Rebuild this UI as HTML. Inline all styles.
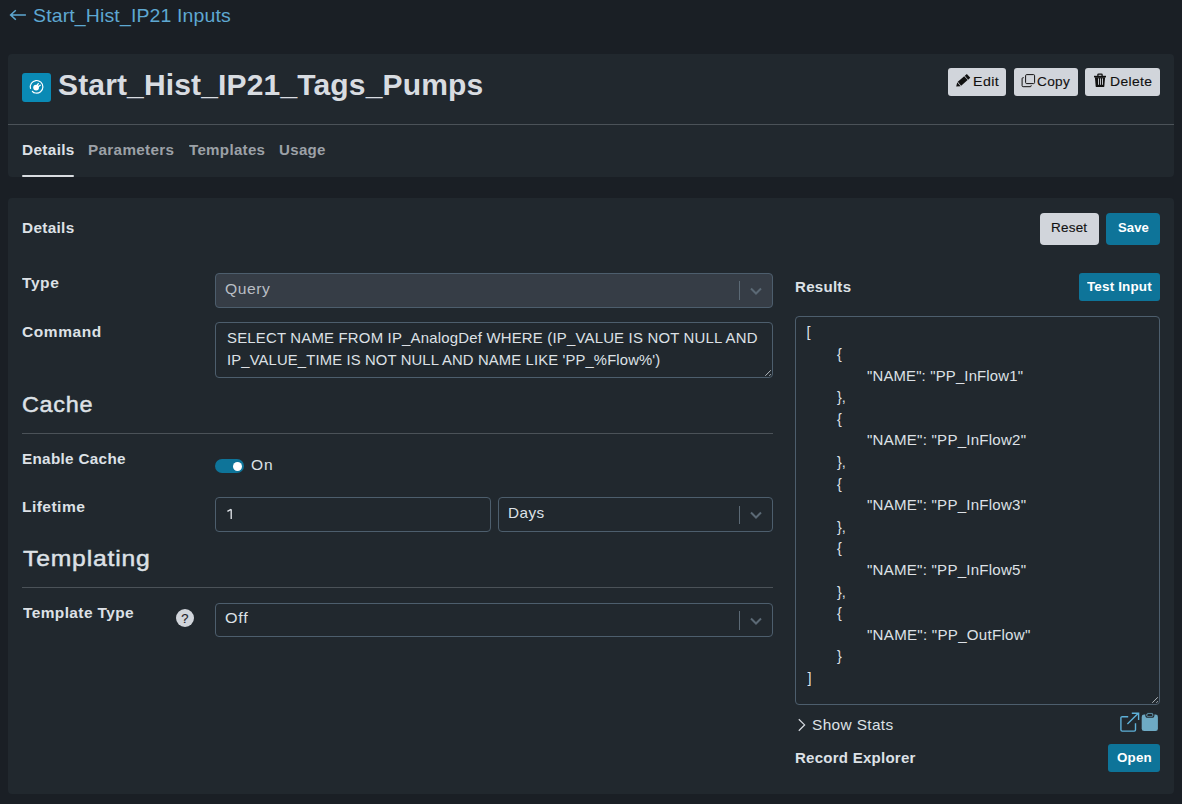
<!DOCTYPE html>
<html><head><meta charset="utf-8"><style>
html,body{margin:0;padding:0}
body{width:1182px;height:804px;overflow:hidden;background:#1a1f25;position:relative;font-family:"Liberation Sans",sans-serif}
.b{position:absolute}
.t{position:absolute;white-space:pre;transform-origin:0 0}
</style></head><body>
<div class="b" style="left:8px;top:54px;width:1166px;height:123px;background:#21282e;border-radius:4px"></div>
<div class="b" style="left:8px;top:198px;width:1166px;height:596px;background:#21282e;border-radius:4px"></div>
<div class="b" style="left:8px;top:124px;width:1166px;height:1px;background:#4b5258"></div>
<div class="b" style="left:22px;top:175px;width:52px;height:2px;background:#d8dce0;border-radius:1px"></div>
<svg class="b" style="left:8px;top:8px" width="20" height="16" viewBox="0 0 20 16"><path d="M2.6 6.9 H17.9 M7.8 2.2 L2.6 6.9 L7.8 11.7" fill="none" stroke="#5ea8d2" stroke-width="1.5"/></svg>
<div class="b" style="left:22px;top:73px;width:29px;height:29px;background:#0a8ab5;border-radius:3px"></div>
<svg class="b" style="left:22px;top:73px" width="29" height="29" viewBox="0 0 29 29"><path d="M8.5 15.4 A6.3 6.3 0 1 1 13.5 20.0 Q11.5 20 10.4 18.3" fill="none" stroke="#fff" stroke-width="1.2" stroke-linecap="round"/><circle cx="14.1" cy="14.6" r="2.9" fill="#fff"/><path d="M14.9 12.6 L16.3 10.6 M16.1 13.8 L18.3 12.3" stroke="#fff" stroke-width="1.3" stroke-linecap="round"/></svg>
<div class="b" style="left:948px;top:68px;width:58px;height:28px;background:#d1d5db;border-radius:3px"></div>
<div class="b" style="left:1014px;top:68px;width:64px;height:28px;background:#d1d5db;border-radius:3px"></div>
<div class="b" style="left:1085px;top:68px;width:75px;height:28px;background:#d1d5db;border-radius:3px"></div>
<svg class="b" style="left:950px;top:70px" width="24" height="20" viewBox="0 0 24 20"><g transform="translate(6.2,16.6) rotate(-41)" fill="#111"><path d="M0 0 L3.6 -2.6 L3.6 2.6 Z"/><rect x="4.3" y="-2.6" width="8.6" height="5.2"/><rect x="13.6" y="-2.6" width="2.8" height="5.2"/></g></svg>
<svg class="b" style="left:1021px;top:73px" width="15" height="15" viewBox="0 0 15 15"><rect x="4.6" y="1.6" width="9" height="9" rx="1.1" fill="none" stroke="#111" stroke-width="1"/><path d="M2.8 4.7 H2.1 A1 1 0 0 0 1.1 5.7 V12.7 A1 1 0 0 0 2.1 13.7 H9.2 A1 1 0 0 0 10.2 12.7 V12.2" fill="none" stroke="#111" stroke-width="1"/></svg>
<svg class="b" style="left:1093px;top:73px" width="14" height="15" viewBox="0 0 14 15"><path d="M4.9 2.9 V1.7 Q4.9 1.1 5.5 1.1 H8.5 Q9.1 1.1 9.1 1.7 V2.9" fill="none" stroke="#111" stroke-width="1.3"/><rect x="1" y="2.8" width="12" height="1.6" fill="#111"/><path d="M1.9 4.3 H12.1 L11.3 13.6 Q11.2 13.9 10.8 13.9 H3.2 Q2.8 13.9 2.7 13.6 Z" fill="#111"/><path d="M5.5 5.4 V11.8 M7.5 5.4 V11.8 M9.5 5.4 V11.8" stroke="#d1d5db" stroke-width="0.9"/></svg>
<div class="b" style="left:1040px;top:213px;width:59px;height:32px;background:#d1d5db;border-radius:4px"></div>
<div class="b" style="left:1106px;top:213px;width:54px;height:32px;background:#0e7499;border-radius:4px"></div>
<div class="b" style="left:215px;top:273px;width:558px;height:35px;background:#363d46;border:1px solid #4d5e6d;border-radius:4px;box-sizing:border-box"></div>
<div class="b" style="left:739px;top:281.2px;width:1px;height:18.400000000000034px;background:#5b6975"></div><svg class="b" style="left:749px;top:285.5px" width="14" height="10" viewBox="0 0 14 10"><path d="M2 2.5 L7 7.5 L12 2.5" fill="none" stroke="#5b6975" stroke-width="2"/></svg>
<div class="b" style="left:215px;top:322px;width:558px;height:56px;border:1px solid #4d5e6d;border-radius:4px;box-sizing:border-box"></div>
<svg class="b" style="left:761px;top:366px" width="10" height="10" viewBox="0 0 10 10"><path d="M9.9 4.2 L4.3 9.8 M9.9 8.2 L8.4 9.75" stroke="#b4babf" stroke-width="1"/></svg>
<div class="b" style="left:22px;top:433px;width:751px;height:1px;background:#4b5258"></div>
<div class="b" style="left:215px;top:459px;width:29px;height:14px;background:#0e7499;border-radius:7px"></div>
<div class="b" style="left:232.9px;top:461.5px;width:9.0px;height:9.0px;background:#fff;border-radius:50%"></div>
<div class="b" style="left:215px;top:497px;width:276px;height:35px;border:1px solid #4d5e6d;border-radius:4px;box-sizing:border-box"></div>
<div class="b" style="left:498px;top:497px;width:275px;height:35px;border:1px solid #4d5e6d;border-radius:4px;box-sizing:border-box"></div>
<div class="b" style="left:739px;top:505.7px;width:1px;height:18.400000000000034px;background:#5b6975"></div><svg class="b" style="left:749px;top:510.0px" width="14" height="10" viewBox="0 0 14 10"><path d="M2 2.5 L7 7.5 L12 2.5" fill="none" stroke="#5b6975" stroke-width="2"/></svg>
<div class="b" style="left:22px;top:587px;width:751px;height:1px;background:#4b5258"></div>
<div class="b" style="left:175.7px;top:608.8px;width:18.0px;height:18.0px;background:#d1d5db;border-radius:50%"></div>
<div class="t" style="left:175.9px;top:610px;width:18px;text-align:center;font-size:13px;line-height:18px;font-weight:400;color:#1d2228;-webkit-text-stroke:0.15px #1d2228">?</div>
<div class="b" style="left:215px;top:603px;width:558px;height:34px;border:1px solid #4d5e6d;border-radius:4px;box-sizing:border-box"></div>
<div class="b" style="left:739px;top:611.2px;width:1px;height:18.399999999999977px;background:#5b6975"></div><svg class="b" style="left:749px;top:615.5px" width="14" height="10" viewBox="0 0 14 10"><path d="M2 2.5 L7 7.5 L12 2.5" fill="none" stroke="#5b6975" stroke-width="2"/></svg>
<div class="b" style="left:1079px;top:273px;width:81px;height:28px;background:#0e7499;border-radius:3px"></div>
<div class="b" style="left:795px;top:316px;width:365px;height:389px;border:1px solid #4d5e6d;border-radius:4px;box-sizing:border-box"></div>
<svg class="b" style="left:1148px;top:693px" width="10" height="10" viewBox="0 0 10 10"><path d="M9.9 4.2 L4.3 9.8 M9.9 8.2 L8.4 9.75" stroke="#b4babf" stroke-width="1"/></svg>
<svg class="b" style="left:796px;top:717px" width="12" height="16" viewBox="0 0 12 16"><path d="M2.8 2.2 L8.6 7.9 L2.8 13.7" fill="none" stroke="#d5dae0" stroke-width="1.25"/></svg>
<svg class="b" style="left:1118px;top:711px" width="24" height="22" viewBox="0 0 24 22"><path d="M10.2 5.7 H4.2 A1.3 1.3 0 0 0 2.9 7 V18.8 A1.3 1.3 0 0 0 4.2 20.1 H16.2 A1.3 1.3 0 0 0 17.5 18.8 V12.3" fill="none" stroke="#5eb0d8" stroke-width="1.4"/><path d="M9.4 12.9 L20.3 2.2 M13.8 2.3 H20.6 V8.9" fill="none" stroke="#5eb0d8" stroke-width="1.4"/></svg>
<svg class="b" style="left:1141px;top:711px" width="18" height="22" viewBox="0 0 18 22"><rect x="0.7" y="3.6" width="16.2" height="16.5" rx="2.4" fill="#6eaac4"/><rect x="4.8" y="1.7" width="8.1" height="4.6" rx="2" fill="#6eaac4" stroke="#21282e" stroke-width="1.1"/><rect x="6.2" y="3" width="5.3" height="2.3" rx="1.1" fill="#21282e"/></svg>
<div class="b" style="left:1108px;top:744px;width:52px;height:28px;background:#0e7499;border-radius:3px"></div>
<div class="t" style="left:33.28px;top:6.32px;font-size:19px;line-height:19px;font-weight:400;color:#5ea8d2;letter-spacing:0.143px;transform:scaleX(1.0244);">Start_Hist_IP21 Inputs</div>
<div class="t" style="left:58.19px;top:70.26px;font-size:29.7px;line-height:29.7px;font-weight:700;color:#d8dce1;letter-spacing:0.131px;transform:scaleX(1.0120);">Start_Hist_IP21_Tags_Pumps</div>
<div class="t" style="left:972.61px;top:75.40px;font-size:13px;line-height:13px;font-weight:400;color:#111;letter-spacing:0.391px;transform:scaleX(1.0914);-webkit-text-stroke:0.12px #111;">Edit</div>
<div class="t" style="left:1037.35px;top:75.40px;font-size:13px;line-height:13px;font-weight:400;color:#111;letter-spacing:0.305px;transform:scaleX(1.0497);-webkit-text-stroke:0.12px #111;">Copy</div>
<div class="t" style="left:1109.73px;top:75.40px;font-size:13px;line-height:13px;font-weight:400;color:#111;letter-spacing:0.314px;transform:scaleX(1.0700);-webkit-text-stroke:0.12px #111;">Delete</div>
<div class="t" style="left:21.53px;top:142.81px;font-size:14.4px;line-height:14.4px;font-weight:700;color:#dde1e6;letter-spacing:0.319px;transform:scaleX(1.0665);">Details</div>
<div class="t" style="left:87.74px;top:142.81px;font-size:14.4px;line-height:14.4px;font-weight:700;color:#9ca1a7;letter-spacing:0.319px;transform:scaleX(1.0592);">Parameters</div>
<div class="t" style="left:188.80px;top:142.81px;font-size:14.4px;line-height:14.4px;font-weight:700;color:#9ca1a7;letter-spacing:0.281px;transform:scaleX(1.0506);">Templates</div>
<div class="t" style="left:279.35px;top:142.81px;font-size:14.4px;line-height:14.4px;font-weight:700;color:#9ca1a7;letter-spacing:0.306px;transform:scaleX(1.0457);">Usage</div>
<div class="t" style="left:21.84px;top:221.11px;font-size:14.4px;line-height:14.4px;font-weight:700;color:#dde1e6;letter-spacing:0.307px;transform:scaleX(1.0639);">Details</div>
<div class="t" style="left:1050.76px;top:221.40px;font-size:13px;line-height:13px;font-weight:400;color:#111;letter-spacing:0.202px;transform:scaleX(1.0382);-webkit-text-stroke:0.12px #111;">Reset</div>
<div class="t" style="left:1117.59px;top:221.40px;font-size:13px;line-height:13px;font-weight:700;color:#ffffff;letter-spacing:0.053px;transform:scaleX(1.0083);">Save</div>
<div class="t" style="left:21.90px;top:275.61px;font-size:14.4px;line-height:14.4px;font-weight:700;color:#dde1e6;letter-spacing:0.519px;transform:scaleX(1.0788);">Type</div>
<div class="t" style="left:224.81px;top:282.31px;font-size:14.4px;line-height:14.4px;font-weight:400;color:#b9bec4;letter-spacing:0.515px;transform:scaleX(1.0884);">Query</div>
<div class="t" style="left:21.62px;top:325.41px;font-size:14.4px;line-height:14.4px;font-weight:700;color:#dde1e6;letter-spacing:0.545px;transform:scaleX(1.0765);">Command</div>
<div class="t" style="left:226.66px;top:331.11px;font-size:14.4px;line-height:14.4px;font-weight:400;color:#dde1e6;letter-spacing:0.195px;transform:scaleX(1.0364);">SELECT NAME FROM IP_AnalogDef WHERE (IP_VALUE IS NOT NULL AND</div>
<div class="t" style="left:226.67px;top:352.81px;font-size:14.4px;line-height:14.4px;font-weight:400;color:#dde1e6;letter-spacing:0.147px;transform:scaleX(1.0281);">IP_VALUE_TIME IS NOT NULL AND NAME LIKE &#x27;PP_%Flow%&#x27;)</div>
<div class="t" style="left:21.68px;top:393.68px;font-size:22px;line-height:22px;font-weight:400;color:#dde1e6;letter-spacing:0.634px;transform:scaleX(1.0653);-webkit-text-stroke:0.45px #dde1e6;">Cache</div>
<div class="t" style="left:21.69px;top:451.71px;font-size:14.4px;line-height:14.4px;font-weight:700;color:#dde1e6;letter-spacing:0.311px;transform:scaleX(1.0584);">Enable Cache</div>
<div class="t" style="left:250.92px;top:458.21px;font-size:14.4px;line-height:14.4px;font-weight:400;color:#dde1e6;letter-spacing:0.889px;transform:scaleX(1.0800);">On</div>
<div class="t" style="left:21.52px;top:499.71px;font-size:14.4px;line-height:14.4px;font-weight:700;color:#dde1e6;letter-spacing:0.400px;transform:scaleX(1.0844);">Lifetime</div>
<div class="t" style="left:507.74px;top:506.21px;font-size:14.4px;line-height:14.4px;font-weight:400;color:#dde1e6;letter-spacing:0.414px;transform:scaleX(1.0639);">Days</div>
<div class="t" style="left:23.10px;top:547.84px;font-size:22.4px;line-height:22.4px;font-weight:400;color:#dde1e6;letter-spacing:0.741px;transform:scaleX(1.1032);-webkit-text-stroke:0.45px #dde1e6;">Templating</div>
<div class="t" style="left:22.70px;top:605.61px;font-size:14.4px;line-height:14.4px;font-weight:700;color:#dde1e6;letter-spacing:0.373px;transform:scaleX(1.0735);">Template Type</div>
<div class="t" style="left:224.58px;top:611.11px;font-size:14.4px;line-height:14.4px;font-weight:400;color:#dde1e6;letter-spacing:0.643px;transform:scaleX(1.1200);">Off</div>
<div class="t" style="left:795.25px;top:280.01px;font-size:14.4px;line-height:14.4px;font-weight:700;color:#dde1e6;letter-spacing:0.255px;transform:scaleX(1.0471);">Results</div>
<div class="t" style="left:1087.40px;top:280.20px;font-size:13px;line-height:13px;font-weight:700;color:#ffffff;letter-spacing:0.150px;transform:scaleX(1.0344);">Test Input</div>
<div class="t" style="left:812.23px;top:718.21px;font-size:14.4px;line-height:14.4px;font-weight:400;color:#dde1e6;letter-spacing:0.345px;transform:scaleX(1.0701);">Show Stats</div>
<div class="t" style="left:795.15px;top:750.71px;font-size:14.4px;line-height:14.4px;font-weight:700;color:#dde1e6;letter-spacing:0.230px;transform:scaleX(1.0454);">Record Explorer</div>
<div class="t" style="left:1116.70px;top:751.00px;font-size:13px;line-height:13px;font-weight:700;color:#ffffff;letter-spacing:0.195px;transform:scaleX(1.0273);">Open</div>
<div class="t" style="left:806.60px;top:325.31px;font-size:14.4px;line-height:14.4px;font-weight:400;color:#dde1e6;letter-spacing:0.000px;">[</div>
<div class="t" style="left:837.00px;top:346.91px;font-size:14.4px;line-height:14.4px;font-weight:400;color:#dde1e6;letter-spacing:0.000px;">{</div>
<div class="t" style="left:866.97px;top:368.51px;font-size:14.4px;line-height:14.4px;font-weight:400;color:#dde1e6;letter-spacing:0.169px;transform:scaleX(1.0341);">&quot;NAME&quot;: &quot;PP_InFlow1&quot;</div>
<div class="t" style="left:837.00px;top:390.11px;font-size:14.4px;line-height:14.4px;font-weight:400;color:#dde1e6;letter-spacing:0.000px;">},</div>
<div class="t" style="left:837.00px;top:411.71px;font-size:14.4px;line-height:14.4px;font-weight:400;color:#dde1e6;letter-spacing:0.000px;">{</div>
<div class="t" style="left:866.95px;top:433.31px;font-size:14.4px;line-height:14.4px;font-weight:400;color:#dde1e6;letter-spacing:0.229px;transform:scaleX(1.0468);">&quot;NAME&quot;: &quot;PP_InFlow2&quot;</div>
<div class="t" style="left:837.00px;top:454.91px;font-size:14.4px;line-height:14.4px;font-weight:400;color:#dde1e6;letter-spacing:0.000px;">},</div>
<div class="t" style="left:837.00px;top:476.51px;font-size:14.4px;line-height:14.4px;font-weight:400;color:#dde1e6;letter-spacing:0.000px;">{</div>
<div class="t" style="left:866.95px;top:498.11px;font-size:14.4px;line-height:14.4px;font-weight:400;color:#dde1e6;letter-spacing:0.229px;transform:scaleX(1.0468);">&quot;NAME&quot;: &quot;PP_InFlow3&quot;</div>
<div class="t" style="left:837.00px;top:519.71px;font-size:14.4px;line-height:14.4px;font-weight:400;color:#dde1e6;letter-spacing:0.000px;">},</div>
<div class="t" style="left:837.00px;top:541.31px;font-size:14.4px;line-height:14.4px;font-weight:400;color:#dde1e6;letter-spacing:0.000px;">{</div>
<div class="t" style="left:866.95px;top:562.91px;font-size:14.4px;line-height:14.4px;font-weight:400;color:#dde1e6;letter-spacing:0.229px;transform:scaleX(1.0468);">&quot;NAME&quot;: &quot;PP_InFlow5&quot;</div>
<div class="t" style="left:837.00px;top:584.51px;font-size:14.4px;line-height:14.4px;font-weight:400;color:#dde1e6;letter-spacing:0.000px;">},</div>
<div class="t" style="left:837.00px;top:606.11px;font-size:14.4px;line-height:14.4px;font-weight:400;color:#dde1e6;letter-spacing:0.000px;">{</div>
<div class="t" style="left:866.95px;top:627.71px;font-size:14.4px;line-height:14.4px;font-weight:400;color:#dde1e6;letter-spacing:0.249px;transform:scaleX(1.0499);">&quot;NAME&quot;: &quot;PP_OutFlow&quot;</div>
<div class="t" style="left:837.00px;top:649.31px;font-size:14.4px;line-height:14.4px;font-weight:400;color:#dde1e6;letter-spacing:0.000px;">}</div>
<div class="t" style="left:807.60px;top:670.91px;font-size:14.4px;line-height:14.4px;font-weight:400;color:#dde1e6;letter-spacing:0.000px;">]</div>
<svg class="b" style="left:224px;top:507px" width="12" height="14" viewBox="0 0 12 14"><path d="M7.2 2.3 V11.9 M3.4 4.4 L7.1 2.3" fill="none" stroke="#dde1e6" stroke-width="1.35"/></svg>
</body></html>
